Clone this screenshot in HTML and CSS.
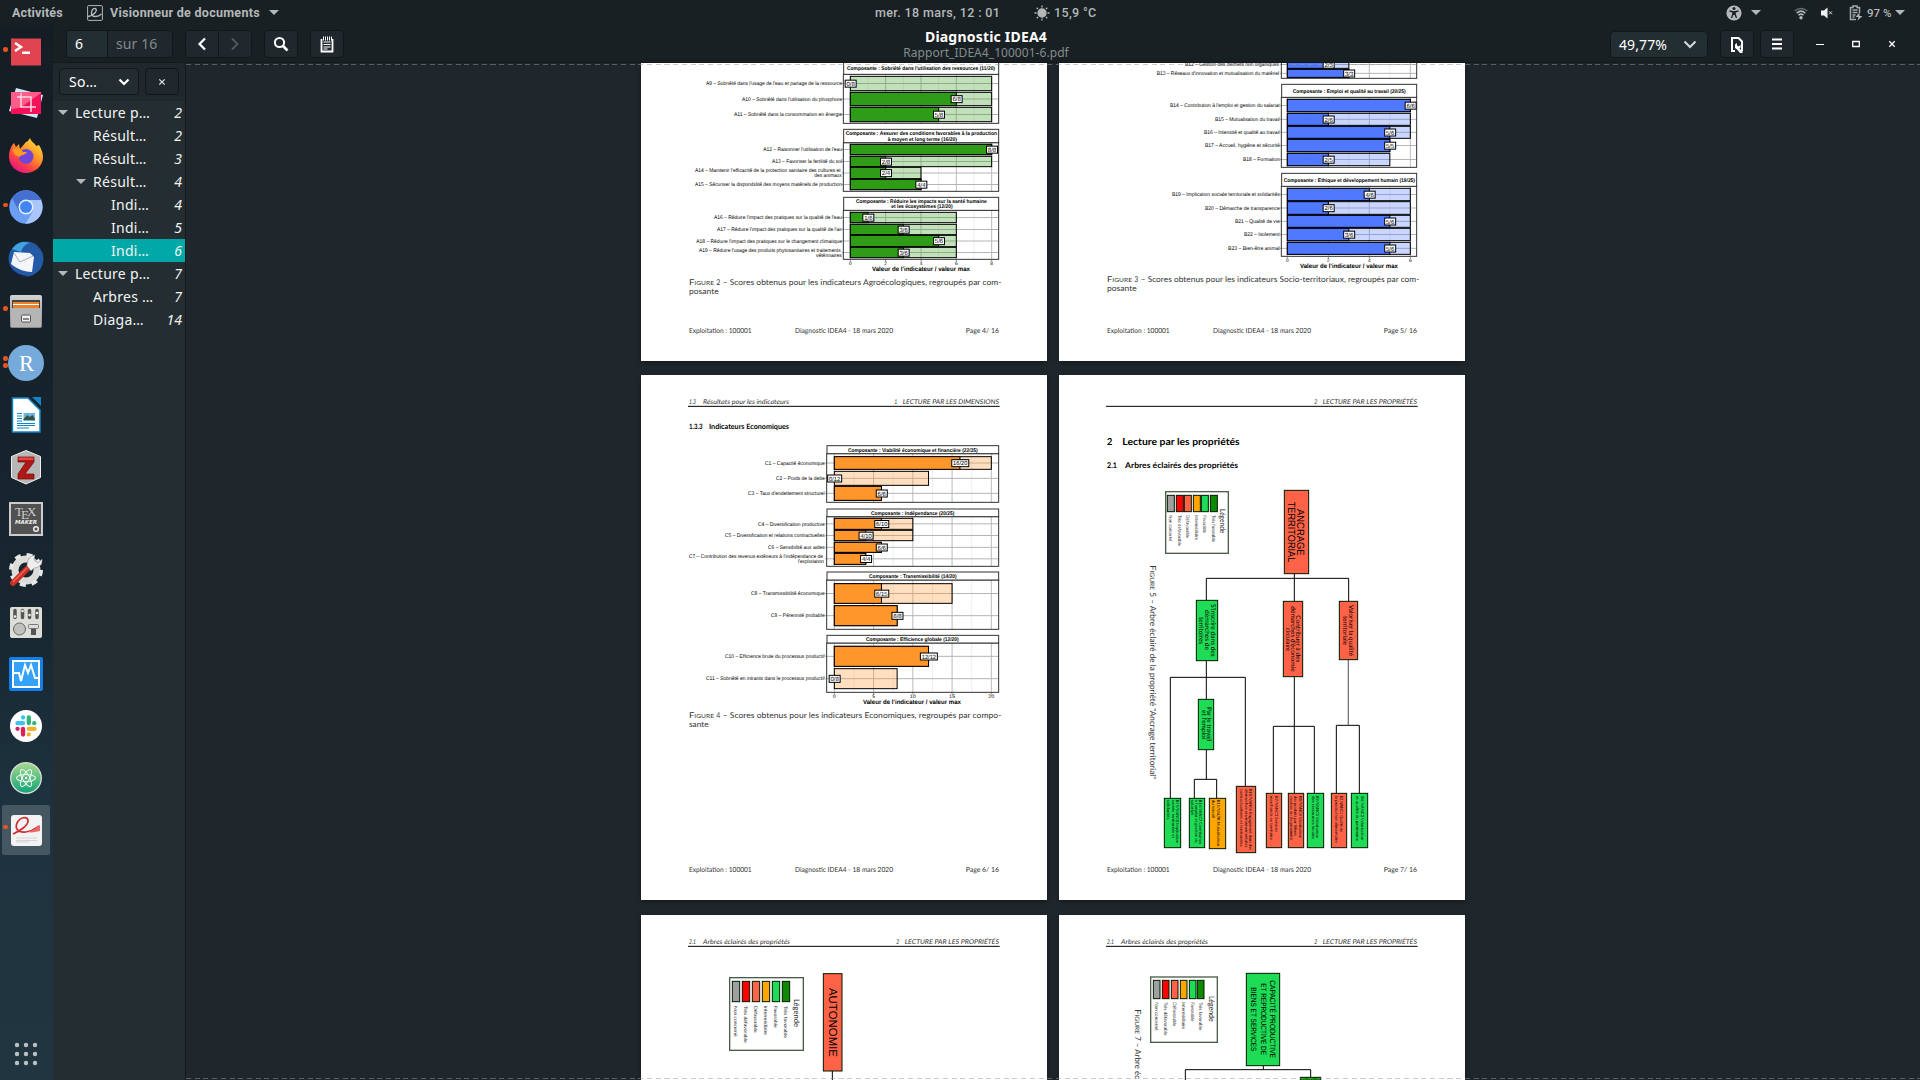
FILE: index.html
```html
<!DOCTYPE html>
<html lang="fr">
<head>
<meta charset="utf-8">
<title>Diagnostic IDEA4</title>
<link rel="stylesheet" href="styles.css">
</head>
<body>
<div class="desktop">
  <header class="topbar">
    <div class="topbar-left">
      <span class="activities">Activités</span>
      <svg class="app-icon" width="16" height="16" viewBox="0 0 16 16" fill="none" stroke="#b4b8b9"><rect x=".6" y=".6" width="14.8" height="14.8" rx="1"/><path stroke-width="1.4" d="M1 11.5c3-.3 8-3.500 8.300-6C9.500 3.500 8 3 6.800 3.600 4.500 4.700 4 8 4.800 9.800 6 12.500 11 12 14.500 9"/></svg>
      <span class="app-name">Visionneur de documents</span>
      <i class="tri"></i>
    </div>
    <div class="topbar-mid">
      <span class="clock">mer. 18 mars, 12 : 01</span>
      <svg class="sun" width="16" height="16" viewBox="0 0 16 16" stroke="#b4b8b9" stroke-width="1.300"><circle cx="8" cy="8" r="4" fill="#b4b8b9"/><path d="M8 .5v2M8 13.500v2M.5 8h2M13.500 8h2M2.700 2.700l1.300 1.300M12 12l1.300 1.300M2.700 13.300L4 12M12 4l1.300-1.300"/></svg>
      <span class="temp">15,9 °C</span>
    </div>
    <div class="topbar-right">
      <svg width="16" height="16" viewBox="0 0 16 16"><circle cx="8" cy="8" r="7.600" fill="#b4b8b9"/><circle cx="8" cy="3.600" r="1.500" fill="#192024"/><path d="M3.500 6l3.500.8V9l-1.500 4M12.500 6L9 6.800V9l1.500 4" fill="none" stroke="#192024" stroke-width="1.300"/><path d="M6.700 6.200h2.600v3.800H6.700z" fill="#192024"/></svg>
      <i class="tri tri-access"></i>
      <svg class="wifi" width="14" height="14" viewBox="0 0 14 14" fill="none" stroke-width="1.500"><path stroke="#666c6f" d="M.8 5c3.700-3.500 8.700-3.500 12.400 0"/><path stroke="#b4b8b9" d="M2.700 7.200c2.600-2.500 6-2.500 8.600 0M4.500 9.300c1.500-1.400 3.500-1.400 5 0"/><circle cx="7" cy="11.800" r="1.700" fill="#b4b8b9"/></svg>
      <svg class="volume" width="12" height="12" viewBox="0 0 12 12"><path fill="#f0f0f0" d="M0 3.500h3L6.500.5v11L3 8.500H0z"/><path d="M8 4.300l3 3M11 4.300l-3 3" stroke="#d0d0d0"/></svg>
      <svg class="battery" width="14" height="16" viewBox="0 0 14 16" fill="none" stroke="#a4a9ab" stroke-width="1.500"><path d="M7 14.500H1.500v-12H4V1h4v1.500h2.500V8M3.500 5h5M3.500 7.500h5M3.500 10h3M3.500 12h2"/><path fill="#b4b8b9" stroke="none" d="M10.500 7.500L6.500 12h3l-1 3.500L13.500 11h-3z"/></svg>
      <span class="percent">97 %</span>
      <i class="tri"></i>
    </div>
  </header>

  <div class="workspace">
    <nav class="dock">
      <div class="app run"><svg viewBox="0 0 36 36"><path fill="#df4450" d="M3 4.500h30v27H3z"/><path d="M7 9l6 4-6 4" fill="none" stroke="#fff" stroke-width="2.500"/><path fill="#fff" d="M14 17.500h8v2.500h-8z"/></svg></div>
      <div class="app"><svg viewBox="0 0 36 36"><path fill="#cfe6f8" d="M8 2l27 7-6 23L1 25z"/><path fill="#f5115a" d="M3 6h30v22H3z"/><path fill="#ff5c88" d="M3 6h30v1L12 22l-9 1z"/><path d="M12 7v14h15M8 11h14v15" transform="translate(1)" fill="none" stroke="#ffd9e4" stroke-width="1.500"/></svg></div>
      <div class="app"><svg viewBox="0 0 36 36"><defs><linearGradient id="ff" x1="1" y1="0" x2=".3" y2="1"><stop offset="0" stop-color="#fff04a"/><stop offset=".45" stop-color="#ff9a26"/><stop offset=".75" stop-color="#ff4342"/><stop offset="1" stop-color="#e31587"/></linearGradient></defs><path fill="url(#ff)" d="M18 4C20 4 21 1 22 0c1 4 5 5 6 8l3-1c3 5 4 9 4 12 0 9-8 16-17 16S1 28 1 19C1 13 3 8 6 5l2 4 3-3 1 5z"/><circle cx="18" cy="18.500" r="7.500" fill="#7145d8"/><path fill="#ff9b20" d="M5 11c5-2 8 0 10 3h4c-2 4-6 2-7 5-5-1-7-4-7-8z"/></svg></div>
      <div class="app run"><svg viewBox="0 0 36 36"><circle cx="18" cy="18" r="16.700" fill="#6a9ff5"/><path fill="#466fd2" d="M4 9A16.700 16.700 0 0 1 32 9l2 2H18l-7 11z"/><path fill="#a9c5fa" d="M18 11h15a16.700 16.700 0 0 1-15.500 23.700L25 22z"/><circle cx="18" cy="18" r="7.500" fill="#e5effe"/><circle cx="18" cy="18" r="6" fill="#4286f5"/></svg></div>
      <div class="app"><svg viewBox="0 0 36 36"><circle cx="18" cy="18" r="17.500" fill="#235aa5"/><path fill="#3fa4df" d="M4 8c6-8 13-8 18-6-5 1-8 5-9 9z"/><path fill="#1c1846" d="M1 22c2 7 8 11 15 12.500L20 35C11 37 1 31 .7 22z"/><path fill="#f5f6fa" d="M6 11l16 1 4 4-2 15c-9 0-16-4-21-8z"/><path d="M6 12l6 9 13-6" fill="none" stroke="#a4b0bd"/></svg></div>
      <div class="app run"><svg viewBox="0 0 36 36"><defs><linearGradient id="fg" x2="0" y2="1"><stop stop-color="#d4d4d4"/><stop offset="1" stop-color="#888"/></linearGradient></defs><rect x="2" y="2" width="32" height="33" rx="2" fill="url(#fg)"/><path fill="#444" d="M4 7h28v10H4z"/><path fill="#e6832c" d="M5 9h26v7H5z"/><path stroke="#fff" d="M5 11.500h26"/><path fill="#b5b5b5" d="M3 15h30v19H3z"/><rect x="13.500" y="22" width="9" height="7" rx="1" fill="#eee" stroke="#555"/><path fill="#888" d="M15 25h6v2h-6z"/></svg></div>
      <div class="app run two"><svg viewBox="0 0 36 36"><circle cx="18" cy="18" r="18" fill="#75aadb"/><text x="11" y="25.500" font-family="Liberation Serif, serif" font-size="23" textLength="15" lengthAdjust="spacingAndGlyphs" fill="#fff">R</text></svg></div>
      <div class="app"><svg viewBox="0 0 36 36"><path fill="#fff" stroke="#1285c5" stroke-width="1.500" d="M4.500 1H20l12 12v22H4.500z"/><path fill="#1285c5" d="M24 0h9v9z"/><path d="M9 16.500h5M9 19h5M9 21.500h5M9 24h5M9 26.500h18M9 28.500h18M9 31h12" stroke="#1285c5" stroke-width="1.100"/><path fill="#6ab7dd" d="M15.500 16H27v8H15.500z"/><path fill="#345245" d="M15.500 22l4-4 2 2 3-2 2.500 4v1H15.500z"/></svg></div>
      <div class="app"><svg viewBox="0 0 36 36"><path fill="#b7b7b7" stroke="#eee" d="M18 1.500l14.500 6v21L18 35 3.500 28.500v-21z"/><path fill="#b01818" stroke="#6d1010" stroke-width=".7" d="M10 8h16v5l-9 12h9v5H10v-5l8-12h-8z"/><path fill="#e94747" d="M10.500 8.500h15V11h-15z"/></svg></div>
      <div class="app"><svg viewBox="0 0 36 36"><path fill="#515151" stroke="#ccc" stroke-width="2" d="M2 2h32v32H2z"/><g font-family="Liberation Serif, serif" font-size="13" fill="#ccc"><text x="7" y="15">T</text><text x="13" y="18">E</text><text x="19" y="15">X</text></g><text x="7" y="23" font-family="DejaVu Sans, sans-serif" font-style="italic" font-weight="bold" font-size="5.500" textLength="22" fill="#eee">MAKER</text><circle cx="28" cy="28" r="2.300" fill="none" stroke="#eee" stroke-width="1.500"/></svg></div>
      <div class="app"><svg viewBox="0 0 36 36"><circle cx="18" cy="18" r="11" fill="none" stroke="#dcdcda" stroke-width="7"/><circle cx="18" cy="18" r="15" fill="none" stroke="#e7e7e5" stroke-width="4" stroke-dasharray="5.900 5.900"/><path d="M5 31L20 16" stroke="#c92f22" stroke-width="6" stroke-linecap="round"/><path d="M5 30L19 16" stroke="#ef6654" stroke-width="1.500"/><path fill="#eee" stroke="#777" stroke-width=".5" d="M19 14c0-5 2-10 8-11l-1 5 4 3 4-4c1 5-3 9-8 9l-3 3z"/></svg></div>
      <div class="app"><svg viewBox="0 0 36 36"><rect x="2" y="3" width="32" height="31" rx="2" fill="#deded8"/><path d="M7 6.500v7M14.500 6.500v7M21.500 6.500v7M29 6.500v7" stroke="#555" stroke-width="3.500" stroke-linecap="round"/><path d="M7 12.500h.1M14.500 7h.1M21.500 11h.1M29 9h.1" stroke="#eee" stroke-width="2.500" stroke-linecap="round"/><circle cx="11.500" cy="25" r="6" fill="#c1c1bb" stroke="#666"/><path fill="#555" d="M23 22h5v9h-5z"/><rect x="20.500" y="20.500" width="10" height="4" rx="1" fill="#ddd" stroke="#777"/></svg></div>
      <div class="app"><svg viewBox="0 0 36 36"><rect x="1" y="1" width="34" height="34" rx="2" fill="#147ee9"/><path fill="#35a1f8" stroke="#fff" stroke-width="2" d="M5 5h26v26H5z"/><path d="M6 17h5l2 8 4-16 3 8 3-8 4 13h4" fill="none" stroke="#fff" stroke-width="2"/></svg></div>
      <div class="app"><svg viewBox="0 0 36 36"><circle cx="18" cy="18" r="16" fill="#fff"/><g stroke-width="4.300" stroke-linecap="round"><path stroke="#36c5f0" d="M15 9.500v.1M9.500 15.200H15"/><path stroke="#2eb67d" d="M20.800 9.500v5.700M26.300 15.200h-.1"/><path stroke="#e01e5a" d="M9.500 20.800h.1M15 20.800v5.700"/><path stroke="#ecb22e" d="M20.800 20.800h5.700M20.800 26.300v.1"/></g></svg></div>
      <div class="app"><svg viewBox="0 0 36 36"><defs><linearGradient id="at" x2="0" y2="1"><stop stop-color="#a7d98f"/><stop offset="1" stop-color="#11a376"/></linearGradient></defs><circle cx="18" cy="18" r="15.300" fill="url(#at)" stroke="#ddd" stroke-width="1.300"/><g fill="none" stroke="#e4f7ea" stroke-width="1.100"><ellipse cx="18" cy="18" rx="9.500" ry="3.500"/><ellipse cx="18" cy="18" rx="9.500" ry="3.500" transform="rotate(60 18 18)"/><ellipse cx="18" cy="18" rx="9.500" ry="3.500" transform="rotate(120 18 18)"/></g><circle cx="18" cy="18" r="1.200" fill="#fff"/></svg></div>
      <div class="app run active"><svg viewBox="0 0 36 36"><rect x="3" y="3" width="31" height="31" rx="3" fill="#f3f3f3"/><path d="M8 26h21M8 28.500h21M8 30h13" stroke="#d3d3d3"/><path d="M5 22c7-3 16-9 15-14-1-4-8-3-11 3-2 5 0 10 9 9 7-1 10-4 13-6" fill="none" stroke="#cf2d30" stroke-width="1.700"/><path fill="#e66a6a" d="M20 20c5-2 9-4 12-7v6c-5 1-9 2-12 1z"/></svg></div>
      <svg class="grid-icon" width="24" height="24" viewBox="0 0 24 24" fill="#bcc1c3"><circle cx="3" cy="3" r="2.200"/><circle cx="12" cy="3" r="2.200"/><circle cx="21" cy="3" r="2.200"/><circle cx="3" cy="12" r="2.200"/><circle cx="12" cy="12" r="2.200"/><circle cx="21" cy="12" r="2.200"/><circle cx="3" cy="21" r="2.200"/><circle cx="12" cy="21" r="2.200"/><circle cx="21" cy="21" r="2.200"/></svg>
    </nav>

    <main class="window">
      <div class="headerbar">
        <div class="bar-left">
          <div class="page-box"><span class="page-num">6</span><span class="page-total">sur 16</span></div>
          <div class="nav-box">
            <span><svg width="10" height="14" viewBox="0 0 10 14"><path d="M8 1.500L2.500 7 8 12.500" fill="none" stroke="#fff" stroke-width="2.200"/></svg></span>
            <span><svg width="10" height="14" viewBox="0 0 10 14"><path d="M2 1.500L7.500 7 2 12.500" fill="none" stroke="#525a5f" stroke-width="1.800"/></svg></span>
          </div>
          <div class="btn"><svg width="16" height="16" viewBox="0 0 16 16" fill="none" stroke="#fff"><circle cx="6.500" cy="6.500" r="4.600" stroke-width="2"/><path d="M10 10l4.500 4.500" stroke-width="2.600"/></svg></div>
          <div class="btn btn-note"><svg width="14" height="17" viewBox="0 0 14 17"><path fill="none" stroke="#fff" stroke-width="1.800" d="M1.500 3v12.500h11V3"/><path d="M3.500 6h7M3.500 8.500h7M3.500 11h7M3.500 13h4" stroke="#fff" stroke-width="1.200"/><path d="M3.500.5v4M5.500.5v4M7.500.5v4M9.500.5v4M11.500.5v4" stroke="#fff"/></svg></div>
        </div>
        <div class="title"><b>Diagnostic IDEA4</b><small>Rapport_IDEA4_100001-6.pdf</small></div>
        <div class="bar-right">
          <div class="zoom-box"><span>49,77%</span><svg width="14" height="9" viewBox="0 0 14 9"><path d="M1.500 1.500L7 7l5.500-5.500" fill="none" stroke="#d7dadb" stroke-width="2"/></svg></div>
          <div class="btn"><svg width="14" height="17" viewBox="0 0 14 17"><path fill="none" stroke="#fff" stroke-width="2" d="M5 15H2V2h6.500L12 5.500V15"/><path fill="#fff" d="M5 8.500l2-1.500v2.500l1.500 1L10.500 9v2.500L9.500 12.500 13 16l-1 1H10L7 13.500 5 12z"/></svg></div>
          <div class="btn btn-menu"><svg width="12" height="12" viewBox="0 0 12 12"><path d="M1 1.500h10M1 6h10M1 10.500h10" stroke="#fff" stroke-width="2.200"/></svg></div>
          <div class="controls">
            <svg width="8" height="8" viewBox="0 0 8 8"><path fill="#fff" d="M0 4h8v1H0z"/></svg>
            <svg width="8" height="8" viewBox="0 0 8 8"><path d="M.7 1.500h6.600v5H.7z" fill="none" stroke="#fff" stroke-width="1.300"/></svg>
            <svg width="8" height="8" viewBox="0 0 8 8"><path d="M1.300 1.300l5.400 5.400M6.700 1.300L1.300 6.700" stroke="#fff" stroke-width="1.300"/></svg>
          </div>
        </div>
      </div>

      <div class="content">
        <aside class="sidebar">
          <div class="side-head">
            <div class="combo"><span>So…</span><svg width="12" height="8" viewBox="0 0 12 8"><path d="M1.500 1.500L6 6l4.500-4.500" fill="none" stroke="#fff" stroke-width="2.200"/></svg></div>
            <div class="close"><svg width="8" height="8" viewBox="0 0 8 8"><path d="M1.300 1.300l5.400 5.400M6.700 1.300L1.300 6.700" stroke="#e6e8e8" stroke-width="1.200"/></svg></div>
          </div>
          <ul class="outline">
            <li class="l1"><i class="tri"></i><span>Lecture p…</span><em>2</em></li>
            <li class="l2"><span>Résult…</span><em>2</em></li>
            <li class="l2"><span>Résult…</span><em>3</em></li>
            <li class="l2"><i class="tri"></i><span>Résult…</span><em>4</em></li>
            <li class="l3"><span>Indi…</span><em>4</em></li>
            <li class="l3"><span>Indi…</span><em>5</em></li>
            <li class="l3 selected"><span>Indi…</span><em>6</em></li>
            <li class="l1"><i class="tri"></i><span>Lecture p…</span><em>7</em></li>
            <li class="l2"><span>Arbres …</span><em>7</em></li>
            <li class="l2"><span>Diaga…</span><em>14</em></li>
          </ul>
        </aside>
        <section class="viewer">
          <div class="pages">
            <svg class="page" id="page4" width="406" height="298" viewBox="3 9 1218 894"></svg>
            <svg class="page" id="page5" width="406" height="298" viewBox="12 9 1218 894"></svg>
            <svg class="page" id="page6" width="406" height="525" viewBox="3 15 1218 1575"></svg>
            <svg class="page" id="page7" width="406" height="525" viewBox="12 15 1218 1575"></svg>
            <svg class="page" id="page8" width="406" height="165" viewBox="3 165 1218 495"></svg>
            <svg class="page" id="page9" width="406" height="165" viewBox="12 165 1218 495"></svg>
          </div>
        </section>
      </div>
    </main>
  </div>
</div>
<script src="pages.js"></script>
</body>
</html>
```
FILE: styles.css
```css
* { box-sizing: border-box; }
body { margin: 0; overflow: hidden; background: #192024; color: #fff; font-family: "Noto Sans", sans-serif; }
svg { display: block; flex: none; }
.desktop { width: 1920px; height: 1080px; display: flex; flex-direction: column; }

.topbar { height: 25px; flex: none; display: grid; grid-template-columns: 875px 851px 194px; align-items: center; background: #192024; color: #b4b8b9; font: bold 12.5px Roboto, sans-serif; white-space: nowrap; }
.topbar > div { display: flex; align-items: center; }
.topbar-left { padding-left: 12px; }
.activities { width: 75px; letter-spacing: .15px; }
.app-name { margin: 0 6px 0 7px; width: 153px; letter-spacing: .28px; }
.clock { width: 126px; letter-spacing: .38px; font-weight: 500; }
.sun { margin-left: 33px; }
.temp { margin-left: 4px; font-weight: 500; letter-spacing: .35px; }
.tri { width: 0; height: 0; border: 5px solid transparent; border-top: 5px solid #b4b8b9; border-bottom: 0; flex: none; }
.tri-access { margin-left: 9px; }
.wifi { margin-left: 33px; }
.volume { margin-left: 13px; }
.battery { margin-left: 16px; }
.percent { margin: 0 5px 0 4px; width: 23px; font-weight: 500; font-size: 11.5px; }

.workspace { flex: 1; display: flex; min-height: 0; }
.dock { width: 53px; flex: none; display: flex; flex-direction: column; padding-top: 1px; background: linear-gradient(#151d24, #172630 55%, #1d333f 75%, #20353f); }
.app { position: relative; height: 51.85px; width: 52px; display: flex; align-items: center; justify-content: center; }
.app svg { width: 36px; height: 36px; }
.run::before { content: ""; position: absolute; left: 3px; top: 21px; width: 4.500px; height: 4.500px; border-radius: 50%; background: #e95420; z-index: 1; }
.two::before { top: 19px; box-shadow: 0 7px #e95420; }
.active::after { content: ""; position: absolute; left: 2px; top: 1px; width: 48px; height: 50px; border-radius: 2px; background: rgba(255,255,255,.18); z-index: 0; }
.active svg { position: relative; z-index: 1; }
.grid-icon { margin: 186px 0 0 14px; }

.window { flex: 1; display: flex; flex-direction: column; min-width: 0; }
.headerbar { height: 38px; flex: none; display: grid; grid-template-columns: 1fr 240px 1fr; align-items: start; border-bottom: 1px solid #14191c; }
.bar-left { display: flex; padding: 5px 0 0 13px; }
.page-box, .nav-box, .btn, .zoom-box, .combo, .close { border: 1px solid #12171a; border-radius: 4px; background: #20282e; }
.page-box { display: flex; width: 107px; height: 28px; font-size: 14px; line-height: 26px; }
.page-num { width: 41px; padding-left: 8px; background: #232e33; border-right: 1px solid #12171a; border-radius: 3px 0 0 3px; }
.page-total { padding-left: 8px; color: #828a8d; letter-spacing: .1px; }
.nav-box { display: flex; width: 67px; height: 28px; margin-left: 12px; }
.nav-box span { flex: 1; display: flex; align-items: center; justify-content: center; }
.nav-box span + span { border-left: 1px solid #12171a; }
.btn { width: 34px; height: 28px; margin-left: 12px; display: flex; align-items: center; justify-content: center; }
.btn-note { margin-left: 12px; }
.title { display: flex; flex-direction: column; align-items: center; margin-left: -1px; }
.title b { font-size: 14px; line-height: 20px; margin-top: 2px; letter-spacing: .2px; }
.title small { font-size: 12px; line-height: 14px; margin-top: -1px; color: #858c8f; letter-spacing: .05px; }
.bar-right { display: flex; justify-content: flex-end; padding: 5px 24px 0 0; }
.zoom-box { width: 98px; height: 27px; margin-top: 1px; background: #232e33; display: flex; align-items: center; justify-content: space-between; padding: 0 10px 0 8px; font-size: 14px; letter-spacing: .1px; }
.bar-right .btn-menu { margin-left: 6px; }
.controls { display: flex; align-items: center; gap: 28px; height: 28px; margin-left: 22px; }
.content { flex: 1; display: flex; min-height: 0; }
.sidebar { width: 133px; flex: none; background: #242e32; border-right: 1px solid #14191c; }
.side-head { display: flex; height: 38px; padding: 5px 6px 0; background: #20282e; }
.combo { width: 80px; height: 27px; display: flex; align-items: center; justify-content: space-between; padding: 0 8px 0 9px; font-size: 14px; background: #232c31; letter-spacing: .3px; }
.close { width: 34px; height: 27px; margin-left: 6px; display: flex; align-items: center; justify-content: center; }
.outline { list-style: none; margin: 0; padding: 0; font-size: 14px; line-height: 23px; letter-spacing: .28px; }
.outline li { display: flex; align-items: center; height: 23px; padding-right: 3px; color: #f2f4f4; }
.outline .tri { margin-right: 7px; }
.outline em { margin-left: auto; letter-spacing: 0; }
.l1 { padding-left: 5px; }
.l2 { padding-left: 40px; }
.l2:has(.tri) { padding-left: 23px; }
.l3 { padding-left: 58px; }
.outline .selected { background: #00a8a7; }

.viewer { flex: 1; position: relative; background: #20272c; display: flex; }
.viewer::before, .viewer::after { content: ""; position: absolute; left: 0; right: 0; height: 1px; background: repeating-linear-gradient(90deg, rgba(150,154,155,.5) 0 5px, transparent 5px 8.700px); z-index: 1; }
.viewer::before { top: 1px; }
.viewer::after { bottom: 1px; }
.pages { margin-left: 455px; display: grid; grid-template-columns: 406px 406px; column-gap: 12px; grid-template-rows: 312px 540px 165px; align-items: start; }
.page { background: #fff; box-shadow: 0 2px 5px #14191c; font-family: "Liberation Sans", sans-serif; text-rendering: geometricPrecision; }
```
FILE: pages.js
```js
// Draws the document pages. Drawing units are a third of a pixel.
const BODY = 'Lato, "Noto Sans", sans-serif';
const SANS = '"Liberation Sans", sans-serif';
const BOLD = 'font-weight="bold"';
const esc = s => s.replace(/&/g, '&amp;').replace(/</g, '&lt;');
const rect = (x1, y1, x2, y2, fill, stroke = '#000', w = 3) =>
  `<rect x="${x1}" y="${y1}" width="${x2 - x1}" height="${y2 - y1}" fill="${fill}" stroke="${stroke}" stroke-width="${w}"/>`;
const line = (d, w = 3, stroke = '#000') => `<path d="${d}" fill="none" stroke="${stroke}" stroke-width="${w}"/>`;
// Text fitted between x1 and x2, on baseline y.
const text = (x1, x2, y, size, s, extra = '', font = BODY) =>
  `<text x="${x1}" y="${y}" font-size="${size}" textLength="${x2 - x1}" lengthAdjust="spacingAndGlyphs" font-family='${font}' fill="${font === SANS || extra === BOLD ? '#000' : '#333'}" ${extra}>${esc(s)}</text>`;
// Text turned to read downwards, from y1 to y2, with its baseline at x.
const down = (x, y1, y2, size, s, font = BODY, fill = '#222', extra = '') =>
  `<text transform="translate(${x} ${y1}) rotate(90)" font-size="${size}" textLength="${y2 - y1}" lengthAdjust="spacingAndGlyphs" font-family='${font}' fill="${fill}" ${extra}>${esc(s)}</text>`;

function chart(o) {
  let out = '';
  for (const p of o.panels) {
    const [top, mid, bottom] = p.y;
    for (let v = 0; v <= o.max; v += o.step / 2) {
      const major = v % o.step === 0;
      out += line(`M${o.x0 + v * o.unit} ${mid}V${bottom}`, major ? 3 : 2, major ? '#bbb' : '#e4e4e4');
    }
    for (const b of p.bars) out += line(`M${o.left - 5} ${(b[0] + b[1]) / 2}H${o.right}`, 3, '#b5b5b5');
    for (const b of p.bars) {
      out += `<g fill-opacity=".3">${rect(o.x0, b[0], o.x0 + b[3] * o.unit, b[1], o.color)}</g>`;
      if (b[2]) out += rect(o.x0, b[0], o.x0 + b[2] * o.unit, b[1], o.color);
    }
    out += rect(o.left, mid, o.right, bottom, 'none', '#333');
    for (const b of p.bars) {
      const s = b[2] + '/' + b[3], w = s.length * 9 + 6, c = o.x0 + b[2] * o.unit + 1, m = (b[0] + b[1]) / 2;
      out += rect(c - w / 2, m - 10, c + w / 2, m + 11, '#fff');
      out += text(c - w / 2 + 4, c + w / 2 - 4, m + 7, 18, s, '', SANS);
      b[4].forEach((t, i) => { out += text(t[0], t[1], m + 5 + (b[4].length > 1 ? i * 16 - 8 : 0), 16, t[2], '', SANS); });
    }
    if (p.title) {
      out += rect(o.left + 1, top, o.right, mid, '#fff', '#333');
      p.title.forEach((t, i) => {
        out += text(t[0], t[1], (top + mid) / 2 + 5.5 + (p.title.length > 1 ? i * 16 - 8 : 0), 16, t[2], BOLD, SANS);
      });
    }
  }
  const end = o.panels[o.panels.length - 1].y[2];
  for (let v = 0; v <= o.max; v += o.step) {
    const x = o.x0 + v * o.unit, w = v > 9 ? 9 : 4;
    out += line(`M${x} ${end}v6`, 2, '#555') + text(x - w, x + w, end + 18, 15, String(v), '', SANS);
  }
  return out + text(o.axis[0], o.axis[1], end + 36, 19, "Valeur de l'indicateur / valeur max", BOLD, SANS);
}

const footer = (dx, y, n) => text(147 + dx, 335 + dx, y, 21, 'Exploitation : 100001') +
  text(465 + dx, 759 + dx, y, 21, 'Diagnostic IDEA4 - 18 mars 2020') +
  text(977 + dx, 1077 + dx, y, 21, `Page ${n}/ 16`);
const it = 'font-style="italic"';
const header = (dx, y, num, left, lx, rnum, right, rx) =>
  (left ? text(147 + dx, 168 + dx, y, 20, num, it) + text(189 + dx, lx + dx, y, 20, left, it) : '') +
  text(rx - 25 + dx, rx - 16 + dx, y, 20, rnum, it) + text(rx + dx, 1077 + dx, y, 20, right, it) +
  line(`M${144 + dx} ${y + 8}H${1079 + dx}`);
const caps = 'font-variant="small-caps"';
const caption = (dx, y, n, s, end) => text(147 + dx, 222 + dx, y, 24, 'Figure', caps) + text(229 + dx, 241 + dx, y, 24, n) +
  text(248 + dx, 1084 + dx, y, 24, '– ' + s) + text(147 + dx, end[1] + dx, y + 27, 24, end[0]);
const show = (id, s) => { document.getElementById(id).innerHTML = s; };

show('page4', chart({
  left: 610, right: 1076, x0: 631, unit: 53, step: 2, max: 8, color: '#2e9c16', axis: [696, 990],
  panels: [
    { y: [6, 43, 190], title: [[621, 1065, "Composante : Sobriété dans l'utilisation des ressources (11/20)"]], bars: [
      [49, 92, 0, 8, [[198, 606, "A9 – Sobriété dans l'usage de l'eau et partage de la ressource"]]],
      [97, 137, 6, 8, [[306, 606, "A10 – Sobriété dans l'utilisation du phosphore"]]],
      [142, 185, 5, 8, [[282, 606, 'A11 – Sobriété dans la consommation en énergie']]]] },
    { y: [208, 248, 394], title: [[617, 1071, 'Composante : Assurer des conditions favorables à la production'], [743, 951, 'à moyen et long terme (16/20)']], bars: [
      [253, 284, 8, 8, [[370, 606, "A12 – Raisonner l'utilisation de l'eau"]]],
      [289, 320, 2, 8, [[396, 606, 'A13 – Favoriser la fertilité du sol']]],
      [322, 356, 2, 4, [[165, 602, "A14 – Maintenir l'efficacité de la protection sanitaire des cultures et"], [523, 605, 'des animaux']]],
      [358, 389, 4, 4, [[165, 606, 'A15 – Sécuriser la disponibilité des moyens matériels de production']]]] },
    { y: [412, 451, 598], title: [[648, 1040, 'Composante : Réduire les impacts sur la santé humaine'], [754, 938, 'et les écosystèmes (12/20)']], bars: [
      [457, 488, 1, 6, [[222, 606, "A16 – Réduire l'impact des pratiques sur la qualité de l'eau"]]],
      [493, 524, 3, 6, [[231, 606, "A17 – Réduire l'impact des pratiques sur la qualité de l'air"]]],
      [526, 560, 5, 6, [[169, 606, "A18 – Réduire l'impact des pratiques sur le changement climatique"]]],
      [562, 593, 3, 6, [[177, 602, "A19 – Réduire l'usage des produits phytosanitaires et traitements"], [528, 605, 'vétérinaires']]]] }]
}) + caption(0, 675, '2', 'Scores obtenus pour les indicateurs Agroécologiques, regroupés par com-', ['posante', 236]) + footer(0, 819, 4));

show('page5', chart({
  left: 679, right: 1085, x0: 697, unit: 61.5, step: 2, max: 6, color: '#5078ff', axis: [735, 1029],
  panels: [
    { y: [-40, -30, 55], bars: [
      [2, 25, 2, 3, [[390, 672, 'B12 – Gestion des déchets non organiques']]],
      [28, 52, 3, 3, [[305, 672, "B13 – Réseaux d'innovation et mutualisation du matériel"]]]] },
    { y: [73, 112, 322], title: [[713, 1052, 'Composante : Emploi et qualité au travail (20/25)']], bars: [
      [118, 155, 6, 6, [[345, 674, "B14 – Contribution à l'emploi et gestion du salariat"]]],
      [160, 196, 2, 6, [[480, 674, 'B15 – Mutualisation du travail']]],
      [199, 235, 5, 6, [[447, 674, 'B16 – Intensité et qualité au travail']]],
      [238, 275, 5, 5, [[450, 674, 'B17 – Accueil, hygiène et sécurité']]],
      [280, 317, 2, 5, [[564, 674, 'B18 – Formation']]]] },
    { y: [340, 379, 589], title: [[686, 1080, 'Composante : Ethique et développement humain (19/25)']], bars: [
      [385, 422, 4, 6, [[351, 674, 'B19 – Implication sociale territoriale et solidarités']]],
      [425, 463, 2, 6, [[450, 674, 'B20 – Démarche de transparence']]],
      [466, 502, 5, 6, [[540, 674, 'B21 – Qualité de vie']]],
      [505, 542, 3, 6, [[567, 674, 'B22 – Isolement']]],
      [547, 583, 5, 6, [[519, 674, 'B23 – Bien-être animal']]]] }]
}) + caption(9, 667, '3', 'Scores obtenus pour les indicateurs Socio-territoriaux, regroupés par com-', ['posante', 236]) + footer(9, 819, 5));

show('page6', header(0, 101, '1.3', 'Résultats pour les indicateurs', 447, '1', 'LECTURE PAR LES DIMENSIONS', 788) +
  text(147, 188, 177, 22, '1.3.3', BOLD) + text(207, 447, 177, 22, 'Indicateurs Economiques', BOLD) +
  chart({
    left: 560, right: 1076, x0: 583, unit: 23.55, step: 5, max: 20, color: '#ff962b', axis: [669, 963],
    panels: [
      { y: [227, 251, 397], title: [[624, 1013, 'Composante : Viabilité économique et financière (22/35)']], bars: [
        [260, 298, 16, 20, [[375, 554, 'C1 – Capacité économique']]],
        [304, 346, 0, 12, [[408, 554, 'C2 – Poids de la dette']]],
        [349, 391, 6, 6, [[324, 554, "C3 – Taux d'endettement structurel"]]]] },
      { y: [417, 440, 589], title: [[693, 943, 'Composante : Indépendance (20/25)']], bars: [
        [445, 478, 6, 10, [[354, 554, 'C4 – Diversification productive']]],
        [481, 512, 4, 10, [[255, 554, 'C5 – Diversification et relations contractuelles']]],
        [517, 547, 6, 6, [[384, 554, 'C6 – Sensibilité aux aides']]],
        [550, 583, 4, 4, [[147, 549, "C7 – Contribution des revenus extérieurs à l'indépendance de"], [474, 552, "l'exploitation"]]]] },
      { y: [606, 630, 778], title: [[687, 950, 'Composante : Transmissibilité (14/20)']], bars: [
        [641, 700, 6, 15, [[333, 554, 'C8 – Transmissibilité économique']]],
        [707, 767, 8, 8, [[393, 554, 'C9 – Pérennité probable']]]] },
      { y: [796, 819, 967], title: [[678, 956, 'Composante : Efficience globale (12/20)']], bars: [
        [829, 889, 12, 12, [[255, 554, 'C10 – Efficience brute du processus productif']]],
        [896, 956, 0, 8, [[198, 554, 'C11 – Sobriété en intrants dans le processus productif']]]] }]
  }) + caption(0, 1045, '4', 'Scores obtenus pour les indicateurs Economiques, regroupés par compo-', ['sante', 206]) + footer(0, 1506, 6));

const GREEN = '#1edc55', RED = '#ff6347', ORANGE = '#ffa500', DARK = '#0f8a00';
// Legend box: swatch left edges run from "Non concerné" to "Très favorable".
function legend(box, xs, w, y1, y2, ty, ends, title) {
  const colors = ['#a0a0a0', '#ff0000', RED, ORANGE, GREEN, DARK];
  const names = ['Non concerné', 'Très défavorable', 'Défavorable', 'Intermédiaire', 'Favorable', 'Très favorable'];
  return rect(...box, '#fff', '#4a5e4a', 4) +
    xs.map((x, i) => rect(x, y1, x + w, y2, colors[i], '#001800') + down(x + w / 2 - 6, ty, ends[i], 14, names[i])).join('') +
    down(title[0], title[1], title[2], 23, 'Légende');
}
const node = (x1, y1, x2, y2, fill, size, lines, font) => rect(x1, y1, x2, y2, fill, '#001800') +
  lines.map(l => down(l[0], l[1], l[2], size, l[3], font, '#000')).join('');

show('page7', header(9, 101, '', '', 0, '2', 'LECTURE PAR LES PROPRIÉTÉS', 794) +
  text(156, 172, 225, 29, '2', BOLD) + text(202, 554, 225, 29, 'Lecture par les propriétés', BOLD) +
  text(156, 186, 294, 24, '2.1', BOLD) + text(210, 549, 294, 24, 'Arbres éclairés des propriétés', BOLD) +
  legend([332, 365, 520, 550], [337, 364, 388, 415, 439, 466], 21, 376, 425, 436, [514, 528, 504, 510, 489, 516], [494, 417, 490]) +
  line('M718 610V694M454 690V625H881V694') +
  node(688, 361, 761, 611, RED, 31, [[727, 417, 557, 'ANCRAGE'], [700, 395, 577, 'TERRITORIAL']], SANS) +
  down(285, 586, 660, 25, 'Figure', BODY, '#333', caps) +
  down(285, 667, 1228, 25, '5 – Arbre éclairé de la propriété "Ancrage territorial"', BODY, '#333') +
  `<g transform="translate(225 660)">` +
  line('M229 212V328M121 625V262H346V589M229 479V568M193 625V568H260V625M493 260V610M430 610V409H553V610M619 610V406H688V610') +
  line('M655 209V406', 4, '#777') +
  node(199, 31, 263, 212, GREEN, 20, [[243, 42, 200, "S'inscrire dans des"], [225, 60, 180, 'démarches de'], [206, 81, 162, 'territoires']]) +
  node(460, 34, 518, 260, RED, 19, [[499, 76, 217, 'Contribuer à des'], [484, 49, 245, "démarches d'économie"], [468, 114, 183, 'circulaire']]) +
  node(628, 34, 683, 209, RED, 19, [[657, 45, 198, 'Valoriser la qualité'], [639, 78, 165, 'territoriale']]) +
  node(205, 328, 251, 479, GREEN, 19, [[232, 351, 454, 'Par le travail'], [216, 360, 448, "et l'emploi"]]) +
  node(103, 625, 152, 773, GREEN, 12, [[138, 629, 759, 'B19/VANC8 Implication'], [126, 629, 744, 'sociale territoriale et'], [111, 629, 688, 'solidarités']]) +
  node(178, 625, 224, 773, GREEN, 12, [[208, 629, 762, 'B14/VANC7 Contribution'], [195, 629, 759, "à l'emploi et gestion du"], [183, 629, 675, 'salariat']]) +
  node(238, 625, 287, 776, ORANGE, 12, [[262, 629, 768, 'B15/VALTR Mutualisation'], [246, 629, 684, 'du travail']]) +
  node(319, 589, 377, 788, RED, 12, [[357, 597, 780, 'B10/VANC6 Engagement dans des'], [344, 597, 772, 'démarches environnementales'], [330, 597, 770, 'contractualisées et territoriales']]) +
  node(409, 610, 455, 773, RED, 12, [[435, 618, 726, 'B7/VANC3 Services'], [421, 618, 750, 'marchands au territoire']]) +
  node(475, 610, 521, 773, RED, 12, [[507, 618, 744, 'B8/VANC4 Valorisation'], [493, 618, 738, 'des produits par filières'], [479, 618, 750, 'courtes ou de proximité']]) +
  node(532, 610, 581, 773, GREEN, 12, [[558, 618, 744, 'B9/VANC5 Valorisation'], [545, 618, 747, 'des ressources locales']]) +
  node(604, 610, 650, 773, RED, 12, [[630, 618, 726, 'B3/VANC1 Qualité de'], [615, 618, 758, 'la production alimentaire']]) +
  node(664, 610, 713, 773, GREEN, 12, [[692, 618, 750, 'B4/VANC2 Valorisation'], [678, 618, 753, 'et qualité du patrimoine']]) +
  `</g>` + footer(9, 1506, 7));

show('page8', header(0, 251, '2.1', 'Arbres éclairés des propriétés', 450, '2', 'LECTURE PAR LES PROPRIÉTÉS', 794) +
  legend([269, 353, 490, 571], [277, 307, 337, 367, 397, 427], 22, 364, 425, 438, [530, 548, 518, 525, 503, 534], [462, 417, 501]) +
  line('M577 632V662') +
  node(550, 341, 606, 633, RED, 35, [[566, 384, 591, 'AUTONOMIE']], SANS));

show('page9', header(9, 251, '2.1', 'Arbres éclairés des propriétés', 450, '2', 'LECTURE PAR LES PROPRIÉTÉS', 794) +
  legend([287, 351, 487, 547], [295, 322, 349, 376, 403, 427], 20, 361, 416, 427, [511, 526, 499, 507, 484, 511], [461, 408, 485]) +
  line('M625 617V629M391 662V629H767V652') +
  node(574, 340, 674, 617, GREEN, 23, [[645, 361, 594, 'CAPACITÉ PRODUCTIVE'], [618, 370, 585, 'ET REPRODUCTIVE DE'], [589, 382, 574, 'BIENS ET SERVICES']], SANS) +
  rect(736, 652, 797, 700, DARK, '#001800') +
  down(241, 448, 522, 25, 'Figure', BODY, '#333', caps) + down(241, 529, 657, 25, '7 – Arbre éc', BODY, '#333'));
```
